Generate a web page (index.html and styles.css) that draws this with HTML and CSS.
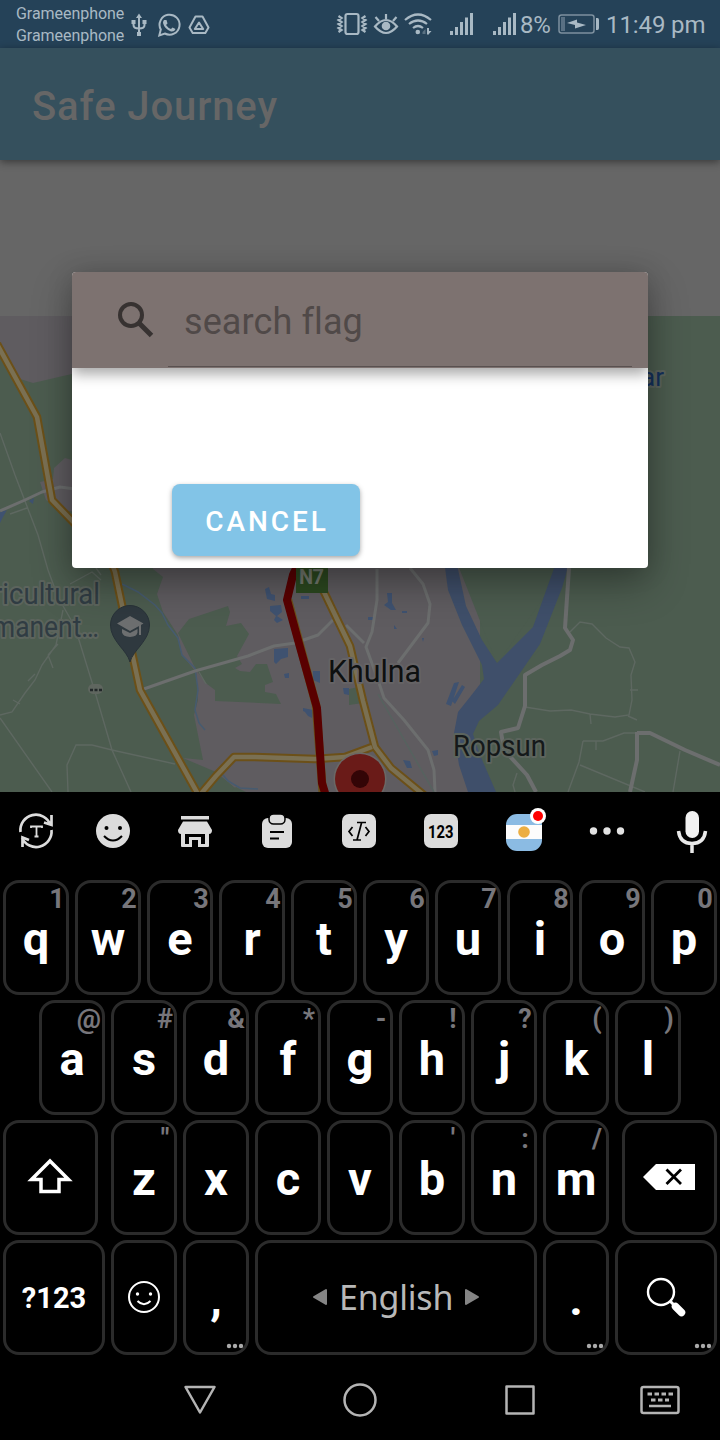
FILE: index.html
```html
<!DOCTYPE html>
<html lang="en">
<head>
<meta charset="utf-8">
<title>Safe Journey</title>
<link rel="stylesheet" href="styles.css">
</head>
<body>
<div class="screen">
  <header class="status">
    <div class="carriers"><span>Grameenphone</span><span>Grameenphone</span></div>
    <svg class="status-left" width="84" height="48" viewBox="128 0 84 48">
      <g fill="none" stroke="#a9b9c4" stroke-width="2">
        <path d="M139 17V34M133.500 23V25Q133.500 28.500 139 28.500Q144.500 28.500 144.500 25V23"/>
        <path d="M159.300 35.500L160.800 29.500A10 10 0 1 1 164.800 33.500Z"/>
        <path d="M195.500 16.500H202.500L208.500 27.500L205.300 33H192.700L189.500 27.500ZM199 22.500L194.800 29H203.200Z" stroke-linejoin="round"/>
      </g>
      <path fill="#a9b9c4" d="M139 13.500L142 18H136ZM131.500 20H135.500V24H131.500ZM142.500 20H146.500V24H142.500ZM137 32H141V36H137ZM164 20L166.500 20L167.500 23.500L166 25Q168 28 171 29L172.500 27.500L175.500 29Q174.500 32 171 31.500Q164.500 29 163 23Q163 21 164 20Z"/>
    </svg>
    <svg class="status-right" width="182" height="48" viewBox="336 0 182 48">
      <g fill="none" stroke="#a9b9c4" stroke-width="2.200">
        <rect x="345.500" y="14" width="13" height="20" rx="2"/>
        <path d="M338.500 16L341.500 18L338.500 20L341.500 22L338.500 24L341.500 26L338.500 28L341.500 30L338.500 32M365.500 16L362.500 18L365.500 20L362.500 22L365.500 24L362.500 26L365.500 28L362.500 30L365.500 32"/>
        <path d="M375 26.500Q386 13.500 397 26.500Q386 39.500 375 26.500ZM386 14V19M375.500 17L379 21M396.500 17L393 21"/>
        <path d="M405 20Q418 9 431 20M409 24Q418 17 427 24M413 28Q418 24 423 28"/>
      </g>
      <g fill="#a9b9c4"><circle cx="386" cy="26" r="4.300"/><circle cx="417.800" cy="32" r="2.300"/><path d="M427 28H429V31H431.500L428 35L427 34Z"/><path opacity=".4" d="M422.500 32L425.500 29V34H422.500Z"/>
      <path id="bars" d="M450 31H453V35H450ZM455 27H458V35H455ZM460 22H463V35H460ZM465 17.500H468V35H465ZM470 13H473V35H470Z"/><use href="#bars" x="43"/></g>
    </svg>
    <span class="battery-text">8%</span>
    <svg class="battery" width="44" height="48" viewBox="556 0 44 48">
      <rect x="559" y="15" width="35" height="18" rx="2.500" fill="none" stroke="#7d909e" stroke-width="1.500"/>
      <path fill="#597083" d="M561 17H565V31H561Z"/><path fill="#a9b9c4" d="M596 18H597.500Q599 18 599 20V28Q599 30 597.500 30H596ZM567 23L577 19.500V22.500L586 25L575 28.500V25Z"/>
    </svg>
    <time class="clock">11:49 pm</time>
  </header>
  <div class="appbar"><h1>Safe Journey</h1></div>
  <main class="content">
    <svg class="map" viewBox="0 316 720 476" width="720" height="476">
      <rect y="316" width="720" height="476" fill="#4c5c4f"/>
      <g fill="#5f5c60">
        <path d="M0 316H140V390L72 374L63 376L33 383L20 379L0 349Z"/>
        <path d="M90 465L65 458L54 468L53 479L40 482L46 500L62 510L90 514Z"/>
        <path d="M150 560L153 569L163 577L157 594L163 612L178 635L182 655L196 672L198 700L194 715L203 760L183 758L216 772L228 782L240 792H480V560Z"/>
      </g>
      <g fill="#4c5c4f">
        <path d="M178 633L189 619L228 606L230 612L226 626L241 623L249 634L237 656L242 664L235 668L240 671L250 672L256 664H267L273 682L265 685V692L276 694L281 704L215 701L215 690L207 684L196 670Z"/>
        <path d="M230 792L236 787L246 792ZM349 689L363 686V703L349 705ZM456 560H570L497 664Z"/>
        <path d="M470 710L540 650V792H470Z"/>
      </g>
      <path fill="#3f4f6a" d="M444 560H456L466 606L482 640L497 663L533 627L557 560H570L562 588L540 644L498 705L479 721L473 734L480 755L496 792H468L459 765L454 733L458 712L470 697L484 679L482 665L462 625L448 590Z"/>
      <g fill="#3f5270">
        <path d="M265 589L269 587L271 594L275 595V601L267 599ZM270 606L281 605L282 612L277 616L283 620L277 623L274 620L276 616L270 611ZM274 649L288 648V657L281 659L276 664L274 662ZM284 674L289 673V678L285 678ZM313 671H320V683L313 680ZM343 688L349 688V695L344 694ZM303 708L313 710L312 718L308 716L305 712L303 711ZM301 596H309V599H301Z"/>
        <path d="M387 593H392V603L396 610L391 610L384 605L388 602ZM368 617H374V620H368ZM402 611H407V613H402ZM394 625L397 629H394ZM446 704L454 683L459 682L451 706ZM452 701L462 685L465 687L455 704ZM403 760L410 761L412 768L407 768ZM432 751L438 750V755L434 756ZM422 638H424L423 642ZM29 501L34 498L33 504ZM0 512L7 510L3 517L0 523Z"/>
      </g>
      <g fill="none" stroke="#465b70" stroke-width="1.500">
        <path d="M122 584L138 592L155 605L162 613L168 625L178 638L182 655L195 668L198 690L195 710L199 723L205 730"/>
        <path d="M218 769L228 781L240 788L258 789"/>
      </g>
      <g fill="none" stroke="#5e6861" stroke-width="1.400">
        <path d="M0 433L15 475L38 535L48 570L58 597L75 627L95 692L112 750L131 792M63 610L56 645L42 665L35 680L25 693L12 712L0 715M0 718L52 792M68 792L67 765L76 745H92L112 750L175 764M48 655L53 668M48 655L58 644M28 681L35 674M13 700L20 704M70 584L92 572L101 580M96 568L101 575M10 514L27 508M199 672L206 684M570 632L580 622L592 624L606 638L620 647L629 648L635 662L631 675L632 700L629 715L615 717L590 714L571 710L550 711L525 707M628 716L637 720M590 714L591 724M630 690H638M583 741L579 762L568 792M583 741L603 741L624 733H637M580 765L645 792M680 751L673 792M517 773L513 785L515 792M596 741V750"/>
      </g>
      <g fill="none" stroke="#6c6e6e" stroke-linejoin="round">
        <path stroke-width="3" d="M0 511L25 500L42 492L60 487L90 491M141 690L195 671L248 656L274 646L295 643L318 635L333 620M377 569V600L372 632L366 647L378 680L384 698L404 720L428 750L434 770L435 792M410 568L423 584L430 604L428 623L398 663M346 625L364 643"/>
        <path stroke-width="4" d="M569 568L565 628L573 640L570 650L560 656L542 665L525 675V706L518 728L501 732L504 750L527 775L536 792M637 732V760L630 792M637 733H650L685 750L720 765"/>
        <path stroke-width="1.500" d="M378 694L434 792" stroke="#56635f"/>
      </g>
      <g fill="none" stroke-linejoin="round">
        <path stroke="#6c5018" stroke-width="8.500" d="M-3 344L37 417L52 500L78 527L105 545L115 572L131 648L140 690L199 796L216 776L234 757H255L315 759L345 757L372 747M300 535L324 592L350 646L363 701L375 747L391 768L425 796M288 600L300 645L316 705L323 796"/>
        <path stroke="#7a7053" stroke-width="4.500" d="M-3 344L37 417L52 500L78 527L105 545L115 572L131 648L140 690L199 796L216 776L234 757H255L315 759L345 757L372 747M300 535L324 592L350 646L363 701L375 747L391 768L425 796"/>
        <path stroke="#590000" stroke-width="8" d="M300 560L293 575L287 600L298 640L317 708L322 783L326 796"/>
      </g>
      <rect x="296" y="565" width="32" height="28" fill="#2c4920"/>
      <g class="map-text">
        <text x="299" y="584" class="map-road" textLength="25">N7</text>
        <text x="-7" y="604" class="map-place" textLength="107" lengthAdjust="spacingAndGlyphs">ricultural</text>
        <text x="-8" y="637" class="map-place" textLength="107" lengthAdjust="spacingAndGlyphs">manent…</text>
        <text x="328" y="681.500" class="map-city" textLength="93" lengthAdjust="spacingAndGlyphs">Khulna</text>
        <text x="453" y="755.500" class="map-town" textLength="93" lengthAdjust="spacingAndGlyphs">Ropsun</text>
        <text x="641" y="386" class="map-link">ar</text>
      </g>
      <rect x="88" y="684" width="15" height="10" rx="5" fill="#5f665f"/>
      <path d="M90 690H93M94.500 690H97.500M99 690H102" stroke="#222829" stroke-width="2.400"/>
      <path fill="#2f393f" stroke="#283238" d="M130 662C127 650 110.500 641 110.500 625A19.500 19.500 0 0 1 149.500 625C149.500 641 133 650 130 662Z"/>
      <path fill="#6d6f70" d="M130 616L143.500 623.500L130 631L117 623.500ZM122 629L130 633L137.500 629V632.500Q137 636.500 130 637Q123 636.500 122 632.500ZM139 625L141 624V635H139Z"/>
      <circle cx="360" cy="779" r="26.500" fill="#6b6865"/><circle cx="360" cy="779" r="25" fill="#6a1b18"/><circle cx="360" cy="779" r="9" fill="#330506"/>
    </svg>
  </main>

  <section class="dialog">
    <div class="search">
      <svg width="36" height="36" viewBox="0 0 36 36"><g fill="none" stroke="#373231"><circle cx="13" cy="13" r="11" stroke-width="4"/><path d="M21.500 21.500L33.500 33.500" stroke-width="5"/></g></svg>
      <div class="field">search flag</div>
    </div>
    <button class="cancel">CANCEL</button>
  </section>

  <section class="keyboard">
    <div class="tools">
      <svg width="720" height="88" viewBox="0 792 720 88">
        <g fill="none" stroke="#dcdcdc" stroke-width="2.700">
          <path d="M20.500 832A15.500 15.500 0 0 1 50.500 825M51.500 815V825L44 822.500M51.500 830A15.500 15.500 0 0 1 22 838M22.500 847V837.500L29 840"/><path d="M31 828V826.500H42V828M36.500 826.500V836.500M34.500 836.500H38.500" stroke-width="1.800"/>
        </g>
        <circle cx="113" cy="831" r="17" fill="#dcdcdc"/><circle cx="106.500" cy="828" r="2"/><circle cx="120" cy="828" r="2"/><path d="M104 836Q113 845 122 836" fill="none" stroke="#000" stroke-width="2"/>
        <path fill="#dcdcdc" fill-rule="evenodd" d="M181 816H209V819.500H181ZM183 821.500H207L212 830Q212 834 209 834V846Q209 847 208 847H198V840H192V847H182Q181 847 181 846V834Q178 834 178 830ZM185 834V844H189V837H201V844H205V834Z"/>
        <rect x="262" y="818" width="30" height="30" rx="6" fill="#dcdcdc"/><rect x="269" y="814" width="16" height="10" rx="4.500" fill="#dcdcdc" stroke="#000" stroke-width="1.500"/><path d="M270 832H284M270 838.500H279" stroke="#000" stroke-width="2"/>
        <rect x="342" y="814" width="34" height="34" rx="7" fill="#dcdcdc"/><g fill="none" stroke="#000" stroke-width="1.700"><path d="M352.500 827L349 831.500L352.500 836M365.500 827L369 831.500L365.500 836M357 822.500H366M353 840H361M361.500 823L357 840"/></g>
        <rect x="424" y="814" width="34" height="34" rx="7" fill="#dcdcdc"/><text x="428" y="837.500" class="tool-num" textLength="25.500" lengthAdjust="spacingAndGlyphs">123</text>
        <clipPath id="flag"><rect x="506" y="814" width="36" height="37" rx="11"/></clipPath><g clip-path="url(#flag)"><path fill="#8bbbe3" d="M506 814H542V851H506Z"/><path fill="#fcfcfc" d="M506 825H542V839H506Z"/><circle cx="524" cy="832" r="5.800" fill="#ecae42"/></g>
        <circle cx="538" cy="816" r="8" fill="#fff"/><circle cx="538" cy="816" r="5" fill="#f00"/>
        <g fill="#e2e2e2"><circle cx="593.500" cy="831" r="3.700"/><circle cx="607" cy="831" r="3.700"/><circle cx="620.500" cy="831" r="3.700"/></g>
        <rect x="685.500" y="811" width="13.500" height="27" rx="6.700" fill="#f1f1f1"/><path d="M678.500 831Q680 843.500 692 843.500Q704 843.500 705.500 831M692 843V853" fill="none" stroke="#e9e9e9" stroke-width="3.500"/>
      </svg>
    </div>
    <div class="row"><kbd>q<i>1</i></kbd><kbd>w<i>2</i></kbd><kbd>e<i>3</i></kbd><kbd>r<i>4</i></kbd><kbd>t<i>5</i></kbd><kbd>y<i>6</i></kbd><kbd>u<i>7</i></kbd><kbd>i<i>8</i></kbd><kbd>o<i>9</i></kbd><kbd>p<i>0</i></kbd></div>
    <div class="row"><kbd>a<i>@</i></kbd><kbd>s<i>#</i></kbd><kbd>d<i>&amp;</i></kbd><kbd>f<i>*</i></kbd><kbd>g<i>-</i></kbd><kbd>h<i>!</i></kbd><kbd>j<i>?</i></kbd><kbd>k<i>(</i></kbd><kbd>l<i>)</i></kbd></div>
    <div class="row row-shift">
      <kbd class="side"><svg width="50" height="40" viewBox="0 0 50 40"><path d="M25 4L43.500 22.500H34V34.500H16V22.500H6.500Z" fill="none" stroke="#fff" stroke-width="3.500"/></svg></kbd>
      <div class="letters"><kbd>z<i>"</i></kbd><kbd>x</kbd><kbd>c</kbd><kbd>v</kbd><kbd>b<i>'</i></kbd><kbd>n<i>:</i></kbd><kbd>m<i>/</i></kbd></div>
      <kbd class="side"><svg width="52" height="40" viewBox="0 0 52 40"><path fill="#fff" d="M0 20L13 7H52V33H13Z"/><path d="M23.500 12.500L38 27M38 12.500L23.500 27" stroke="#000" stroke-width="2.800"/></svg></kbd>
    </div>
    <div class="row">
      <kbd class="wide">?123</kbd>
      <kbd class="icon"><svg width="34" height="34" viewBox="0 0 34 34"><circle cx="17" cy="17" r="15" fill="none" stroke="#fff" stroke-width="2"/><circle cx="10.500" cy="14" r="1.700" fill="#fff"/><circle cx="23.500" cy="14" r="1.700" fill="#fff"/><path d="M10.500 21Q17 27.500 23.500 21" fill="none" stroke="#fff" stroke-width="2"/></svg></kbd>
      <kbd>,<svg class="more" width="18" height="6"><g fill="#aaa"><circle cx="3" cy="3" r="2.200"/><circle cx="9" cy="3" r="2.200"/><circle cx="15" cy="3" r="2.200"/></g></svg></kbd>
      <kbd class="space"><svg width="15" height="20" viewBox="0 0 15 20"><path d="M14 3V17L2 10Z" fill="#858585" stroke="#858585" stroke-width="2" stroke-linejoin="round"/></svg><span>English</span><svg width="15" height="20" viewBox="0 0 15 20"><path d="M1 3V17L13 10Z" fill="#858585" stroke="#858585" stroke-width="2" stroke-linejoin="round"/></svg></kbd>
      <kbd>.<svg class="more" width="18" height="6"><g fill="#aaa"><circle cx="3" cy="3" r="2.200"/><circle cx="9" cy="3" r="2.200"/><circle cx="15" cy="3" r="2.200"/></g></svg></kbd>
      <kbd class="wide icon"><svg width="42" height="42" viewBox="0 0 42 42"><circle cx="16" cy="16" r="13" fill="none" stroke="#fff" stroke-width="2.400"/><path d="M25 25L29 29" stroke="#fff" stroke-width="3"/><path d="M30.500 30.500L36.500 36.500" stroke="#fff" stroke-width="7.500" stroke-linecap="round"/></svg><svg class="more" width="18" height="6"><g fill="#aaa"><circle cx="3" cy="3" r="2.200"/><circle cx="9" cy="3" r="2.200"/><circle cx="15" cy="3" r="2.200"/></g></svg></kbd>
    </div>
  </section>
  <nav class="nav">
    <svg width="720" height="80" viewBox="0 1360 720 80"><g fill="none" stroke="#b4b4b4" stroke-width="2.500" stroke-linejoin="round"><path d="M185.500 1387H214.500L200 1412.500Z"/><circle cx="360" cy="1400" r="15.500"/><rect x="506.500" y="1386.500" width="27" height="27"/><rect x="641.500" y="1387" width="37" height="26" rx="2"/><path stroke-width="3" d="M647.500 1394H673" stroke-dasharray="4.500 2.500"/><path stroke-width="3" d="M651 1400H669" stroke-dasharray="4.500 2.500"/><path d="M649 1406H671"/></g></svg>
  </nav>
</div>
</body>
</html>
```
FILE: styles.css
```css
* { box-sizing: border-box; }
body { margin: 0; background: #000; font-family: Roboto, sans-serif; }
svg { display: block; flex: none; }
.screen { position: relative; width: 720px; height: 1440px; overflow: hidden; display: flex; flex-direction: column; }
.status { height: 48px; flex: none; background: #254258; color: #a9b9c4; display: flex; align-items: center; padding-left: 16px; }
.carriers { display: flex; flex-direction: column; width: 112px; font-size: 16px; line-height: 22px; letter-spacing: -.05px; padding-top: 1px; }
.status-right { margin-left: 124px; }
.battery-text { width: 36px; padding-left: 2px; font-size: 24px; white-space: nowrap; letter-spacing: -.3px; padding-top: 1px; }
.battery { margin-left: 2px; }
.clock { margin-left: 6px; font-size: 24px; letter-spacing: -.1px; white-space: nowrap; padding-top: 1px; }
.appbar { position: relative; height: 112px; flex: none; display: flex; align-items: center; padding: 4px 32px 0; background: #35505d; box-shadow: 0 2px 8px rgba(0,0,0,.45); }
.appbar h1 { margin: 0; color: #666; font-size: 40px; font-weight: 500; letter-spacing: .9px; }
.content { height: 632px; flex: none; padding-top: 156px; background: #666; }
.map-text { font-family: Roboto, sans-serif; paint-order: stroke; stroke-linejoin: round; stroke: #5c645d; stroke-width: 4px; }
.map-road { fill: #747a6f; stroke: none; font-size: 20px; font-weight: 700; }
.map-place { fill: #303c43; font-size: 30px; }
.map-city { fill: #0e1010; stroke: #656365; font-size: 32px; }
.map-town { fill: #15191a; font-size: 29px; }
.map-link { fill: #14305b; font-size: 26px; }
.dialog { position: absolute; left: 72px; top: 272px; width: 576px; height: 296px; border-radius: 4px; background: #fff; box-shadow: 0 16px 40px rgba(0,0,0,.3), 0 2px 26px rgba(0,0,0,.16); }
.search { height: 96px; border-radius: 4px 4px 0 0; background: #7d7270; box-shadow: 0 6px 14px rgba(0,0,0,.35); clip-path: inset(0 0 -30px 0); display: flex; align-items: center; padding: 0 16px 0 46px; }
.field { width: 464px; height: 94px; margin: 0 0 0 14px; padding: 0 16px; line-height: 98px; font-size: 36px; letter-spacing: .1px; color: #504948; border-bottom: 1px solid #595150; }
.cancel { display: block; width: 188px; height: 72px; margin: 116px 0 0 100px; padding: 2px 0 0 2px; border: 0; border-radius: 8px; background: #82c4e7; box-shadow: 0 2px 5px rgba(0,0,0,.35); color: #fff; font: 500 28px Roboto, sans-serif; letter-spacing: 2.900px; }
.keyboard { height: 568px; flex: none; background: #000; }
.tools { height: 88px; }
.tool-num { fill: #000; font: 700 19px Roboto, sans-serif; }
.row { height: 120px; display: flex; justify-content: center; gap: 6px; }
.row-shift { gap: 13px; }
.letters { display: flex; gap: 6px; }
kbd { position: relative; width: 66px; height: 115px; display: flex; align-items: center; justify-content: center; border: 3px solid #2b2b2b; border-radius: 16px; color: #fff; font: 700 47px/1 Roboto, sans-serif; padding-top: 2px; }
kbd i { position: absolute; right: 1px; top: 2px; min-width: 16px; text-align: center; font: 700 27px/28px Roboto, sans-serif; color: #77767b; }
.more { position: absolute; right: 2px; bottom: 3px; }
.side { width: 95px; padding: 0 2px 2px 0; }
.wide { width: 102px; font-size: 29px; padding-top: 2px; }
.icon { padding: 0 0 2px; }
.space { width: 282px; gap: 12px; padding: 0 0 1px; }
.space span { width: 114px; white-space: nowrap; color: #b8b8b8; font: 400 34px "Noto Sans", sans-serif; letter-spacing: -.2px; text-align: center; }
.nav { height: 80px; flex: none; background: #000; }
```
